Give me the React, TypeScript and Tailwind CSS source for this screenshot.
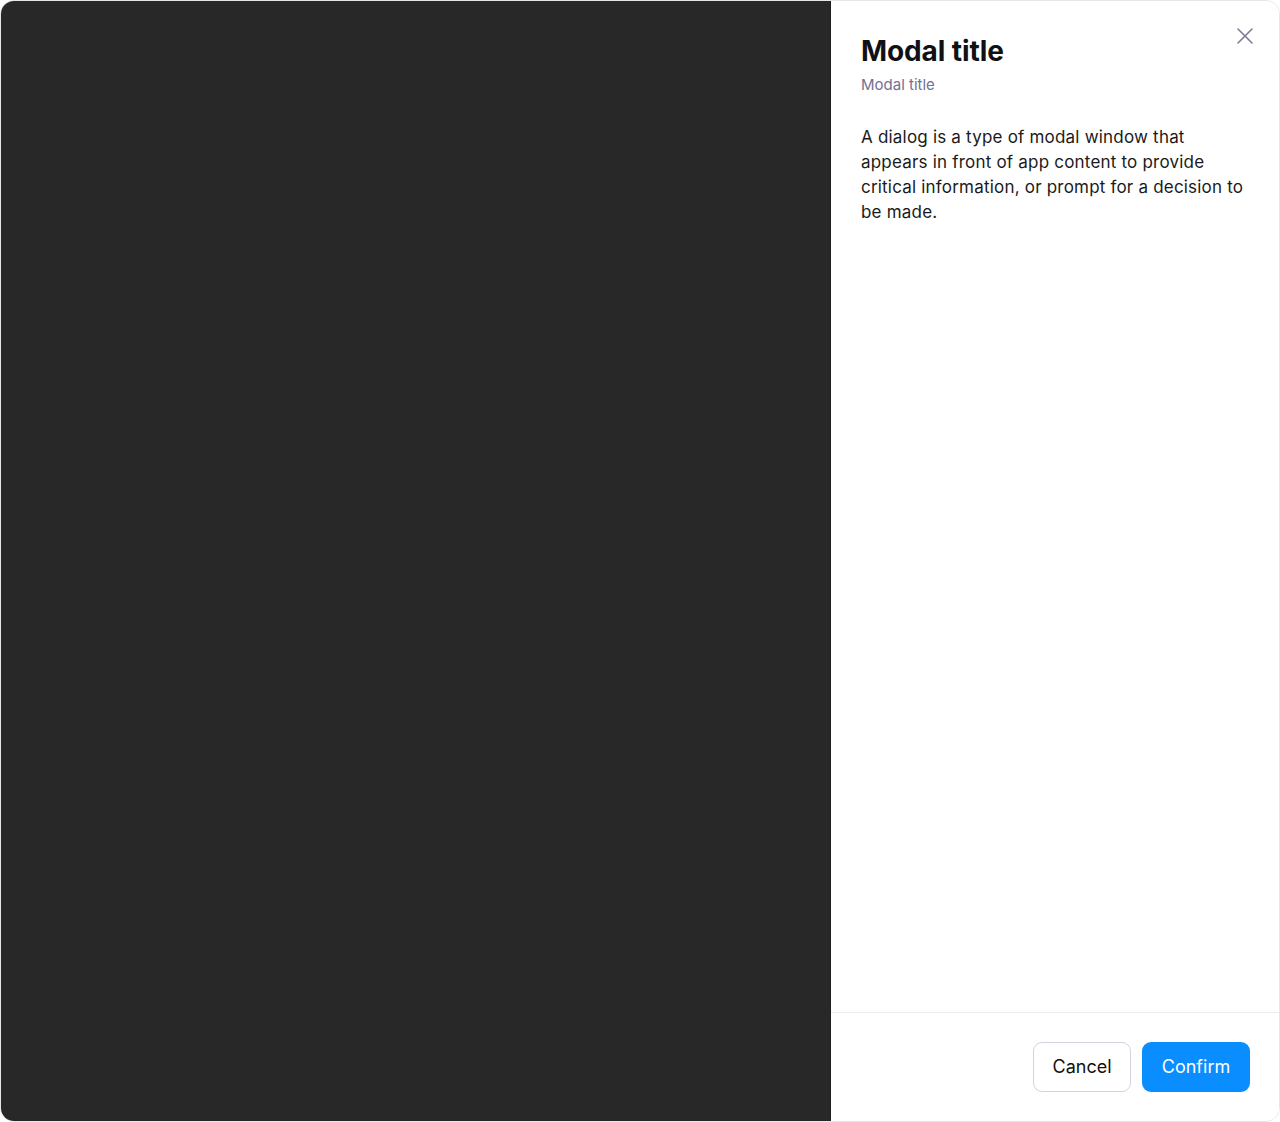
import React from "react";

export default function App() {
  return (
    <div className="w-[1280px] h-[1122px] bg-white" style={{ fontFamily: "Inter, 'Noto Sans', sans-serif" }}>
      <div className="w-full h-full flex rounded-[14px] border border-[#e6e6ea] overflow-hidden">
        <div className="w-[830px] shrink-0 h-full bg-[#282828] border-r border-[#1e1e1e]" />
        <div className="flex-1 flex flex-col bg-white">
          <div className="flex-1 relative pl-[30px] pr-[30px] pt-[32px]">
            <button className="absolute top-[26px] right-[25px] w-[18px] h-[18px] flex items-center justify-center text-[#7d7b9b]">
              <svg width="18" height="18" viewBox="0 0 18 18" fill="none" stroke="currentColor" strokeWidth="1.6" strokeLinecap="round">
                <path d="M2 2L16 16M16 2L2 16" />
              </svg>
            </button>
            <h2 className="text-[28px] leading-[36px] font-bold text-[#111114] tracking-[-0.1px]">Modal title</h2>
            <p className="mt-[6px] text-[15px] leading-[20px] text-[#737191]">Modal title</p>
            <p className="mt-[30px] w-[386px] text-[17px] leading-[25px] tracking-[0.2px] text-[#1a1a1a]">
              A dialog is a type of modal window that appears in front of app content to provide critical information, or prompt for a decision to be made.
            </p>
          </div>
          <div className="border-t border-[#ececef] h-[109px] flex items-center justify-end gap-[11px] pr-[29px] pb-[1px]">
            <button className="h-[50px] w-[98px] rounded-[9px] border border-[#d3d2de] bg-white text-[18px] text-[#111]">Cancel</button>
            <button className="h-[50px] w-[108px] rounded-[9px] bg-[#0a8dff] text-[18px] text-white">Confirm</button>
          </div>
        </div>
      </div>
    </div>
  );
}
